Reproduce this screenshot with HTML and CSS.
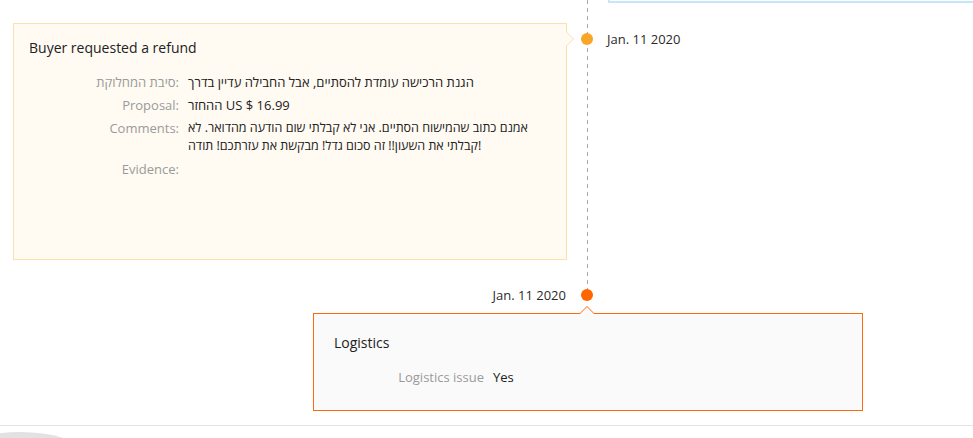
FILE: index.html
```html
<!DOCTYPE html>
<html lang="en">
<head>
<meta charset="utf-8">
<title>Dispute timeline</title>
<link rel="stylesheet" href="styles.css">
</head>
<body>
<div class="page">
  <div class="timeline">
    <div class="row row-prev">
      <div class="prev-card"></div>
    </div>
    <div class="row row-event">
      <section class="card card-refund">
        <h3 class="card-title">Buyer requested a refund</h3>
        <dl class="fields">
          <dt>סיבת המחלוקת:</dt>
          <dd>הגנת הרכישה עומדת להסתיים, אבל החבילה עדיין בדרך</dd>
          <dt>Proposal:</dt>
          <dd>ההחזר US $ 16.99</dd>
          <dt>Comments:</dt>
          <dd class="comment">אמנם כתוב שהמישוח הסתיים. אני לא קבלתי שום הודעה מהדואר. לא קבלתי את השעון!! זה סכום גדל! מבקשת את עזרתכם! תודה!</dd>
          <dt>Evidence:</dt>
          <dd></dd>
        </dl>
      </section>
      <span class="dot dot-amber"></span>
      <span class="date date-right">Jan. 11 2020</span>
    </div>
    <div class="row row-head">
      <span class="date date-left">Jan. 11 2020</span>
      <span class="dot dot-orange"></span>
    </div>
  </div>
  <section class="card card-logistics">
    <h3 class="card-title">Logistics</h3>
    <dl class="fields">
      <dt>Logistics issue</dt>
      <dd>Yes</dd>
    </dl>
  </section>
  <div class="footer">
    <div class="avatar"></div>
  </div>
</div>
</body>
</html>
```

FILE: styles.css
```css
* { box-sizing: border-box; }

html, body {
  margin: 0;
  padding: 0;
  background: #ffffff;
}

body {
  font-family: "Open Sans", "Liberation Sans", sans-serif;
  font-size: 13px;
  color: #333333;
  overflow: hidden;
}

.page {
  width: 973px;
  height: 438px;
  overflow: hidden;
}

.timeline {
  background-image: linear-gradient(#a9a9a9 50%, transparent 50%);
  background-size: 1px 8px;
  background-repeat: repeat-y;
  background-position: 587px 0;
}

.row {
  display: grid;
  grid-template-columns: 581px 12px 1fr;
}

.prev-card {
  grid-column: 3;
  margin-left: 15px;
  height: 3px;
  border-left: 2px solid #c4e7fa;
  border-bottom: 2px solid #c4e7fa;
}

.row-event {
  margin-top: 20px;
  align-items: start;
}

.dot {
  display: block;
  width: 12px;
  height: 12px;
  border-radius: 50%;
}

.dot-amber {
  grid-column: 2;
  margin-top: 10px;
  background: #f9a628;
}

.dot-orange {
  grid-column: 2;
  background: #ff6600;
}

.date {
  line-height: 14px;
  color: #2b2b2b;
  white-space: nowrap;
}

.date-right {
  grid-column: 3;
  margin-top: 9px;
  padding-left: 14px;
}

.row-head {
  margin-top: 29px;
  height: 12px;
  align-items: center;
}

.date-left {
  grid-column: 1;
  text-align: right;
  padding-right: 15px;
  line-height: 12px;
}

.card {
  position: relative;
  border: 1px solid;
}

.card-title {
  margin: 0 0 15px;
  font-size: 14px;
  line-height: 20px;
  font-weight: 400;
  color: #222222;
}

.fields {
  display: grid;
  grid-template-columns: 150px 1fr;
  column-gap: 9px;
  row-gap: 5px;
  margin: 0;
  line-height: 18px;
}

.fields dt {
  text-align: right;
  color: #9a9a9a;
  white-space: nowrap;
}

.fields dd {
  margin: 0;
  color: #222222;
}

.fields dd.comment {
  max-width: 358px;
  font-size: 12.5px;
}

.card-refund {
  grid-column: 1;
  margin-left: 13px;
  width: 554px;
  height: 237px;
  padding: 14px 15px 0;
  background: #fffaf2;
  border-color: #fce0ad;
}

.card-refund::before,
.card-refund::after {
  content: "";
  position: absolute;
  top: 8px;
  width: 0;
  height: 0;
  border-top: 7px solid transparent;
  border-bottom: 7px solid transparent;
  border-left: 7px solid #fce0ad;
}

.card-refund::before {
  left: calc(100% + 1px);
}

.card-refund::after {
  left: 100%;
  border-left-color: #fffaf2;
}

.card-logistics {
  margin: 12px 0 0 313px;
  width: 550px;
  height: 98px;
  padding: 19px 20px 0;
  background: #fafafa;
  border-color: #ff6a0d;
}

.card-logistics::before,
.card-logistics::after {
  content: "";
  position: absolute;
  left: 266px;
  width: 0;
  height: 0;
  border-left: 7px solid transparent;
  border-right: 7px solid transparent;
  border-bottom: 7px solid #ff6a0d;
}

.card-logistics::before {
  bottom: calc(100% + 1px);
}

.card-logistics::after {
  bottom: 100%;
  border-bottom-color: #fafafa;
}

.footer {
  margin-top: 14px;
  border-top: 1px solid #e4e4e4;
  height: 20px;
}

.avatar {
  margin: 6px 0 0 -40px;
  width: 120px;
  height: 40px;
  border-radius: 50%;
  background: #e2e2e2;
}
```
